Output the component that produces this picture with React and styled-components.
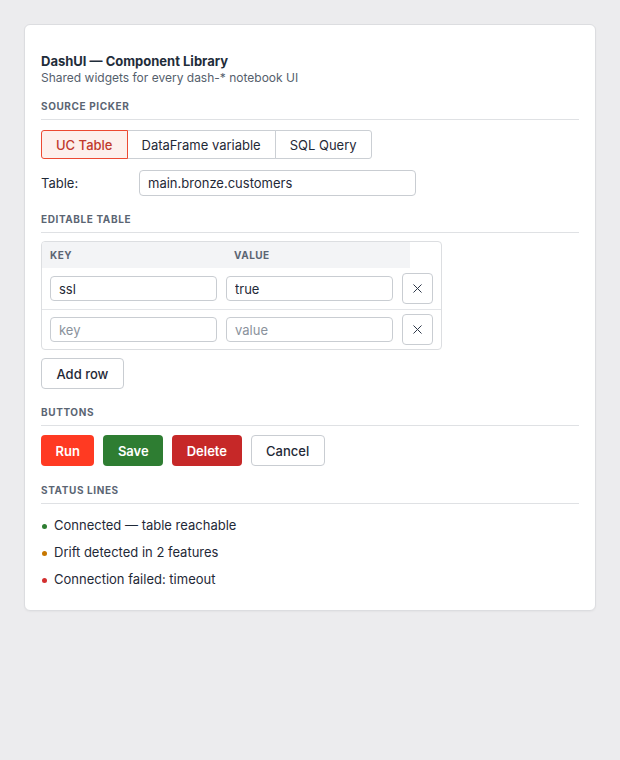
import React, { useState } from "react";
import styled, { createGlobalStyle } from "styled-components";
import { X } from "lucide-react";

const GlobalStyle = createGlobalStyle`
  html, body {
    margin: 0;
    padding: 0;
    background: #ececee;
    font-family: Inter, "Noto Sans", "Liberation Sans", sans-serif;
    color: #1f2937;
  }
`;

const Page = styled.div`
  padding: 24px;
  min-height: 760px;
  box-sizing: border-box;
`;

const Card = styled.div`
  background: #ffffff;
  border: 1px solid #dcdde0;
  border-radius: 6px;
  padding: 27px 16px 22px;
  box-shadow: 0 1px 2px rgba(0, 0, 0, 0.04);
`;

const Title = styled.div`
  font-size: 13px;
  line-height: 18px;
  font-weight: 700;
  color: #1f2d3a;
`;

const Subtitle = styled.div`
  font-size: 12px;
  line-height: 16px;
  color: #55606c;
`;

const SectionTitle = styled.div`
  margin-top: ${(p) => p.$gap || 16}px;
  margin-bottom: ${(p) => p.$after || 9}px;
  padding-bottom: 6px;
  border-bottom: 1px solid #dfe1e4;
  font-size: 10px;
  line-height: 14px;
  font-weight: 700;
  letter-spacing: 0.6px;
  text-transform: uppercase;
  color: #5b6573;
`;

const Segmented = styled.div`
  display: inline-flex;
`;

const Segment = styled.button`
  height: 29px;
  padding: 0 14px;
  font-family: inherit;
  font-size: 13px;
  font-weight: ${(p) => (p.$active ? 500 : 400)};
  color: ${(p) => (p.$active ? "#c0392b" : "#1f2937")};
  background: ${(p) => (p.$active ? "#fdf0ec" : "#ffffff")};
  border: 1px solid ${(p) => (p.$active ? "#ec4a32" : "#cbcfd4")};
  margin-left: -1px;
  position: relative;
  z-index: ${(p) => (p.$active ? 1 : 0)};
  cursor: pointer;

  &:first-child {
    margin-left: 0;
    border-radius: 3px 0 0 3px;
  }
  &:last-child {
    border-radius: 0 3px 3px 0;
  }
`;

const FieldRow = styled.div`
  display: grid;
  grid-template-columns: 90px 277px;
  column-gap: 8px;
  align-items: center;
  margin-top: 11px;
`;

const Label = styled.label`
  font-size: 13px;
  color: #1f2937;
`;

const Input = styled.input`
  box-sizing: border-box;
  width: ${(p) => p.$width || "100%"};
  height: ${(p) => p.$height || 26}px;
  padding: 0 8px;
  font-family: inherit;
  font-size: 13px;
  color: #1f2937;
  border: 1px solid #c9cdd2;
  border-radius: 4px;
  outline: none;

  &::placeholder {
    color: #8a929c;
  }
`;

const TableBox = styled.div`
  width: 401px;
  box-sizing: border-box;
  border: 1px solid #dcdee1;
  border-radius: 4px;
  overflow: hidden;
`;

const HeadRow = styled.div`
  display: flex;
  height: 26px;
`;

const HeadCell = styled.div`
  width: 184px;
  box-sizing: border-box;
  padding-left: 8px;
  display: flex;
  align-items: center;
  background: #f3f4f6;
  font-size: 10px;
  font-weight: 700;
  letter-spacing: 0.5px;
  color: #5b6573;
`;

const BodyRow = styled.div`
  display: flex;
  align-items: center;
  gap: 9px;
  padding: 0 8px;
  height: ${(p) => p.$height}px;
  border-top: ${(p) => (p.$divider ? "1px solid #e3e5e8" : "none")};
`;

const IconButton = styled.button`
  width: 31px;
  height: 31px;
  padding: 0;
  display: flex;
  align-items: center;
  justify-content: center;
  background: #ffffff;
  border: 1px solid #c9cdd2;
  border-radius: 4px;
  color: #2d3748;
  cursor: pointer;
`;

const Button = styled.button`
  height: 31px;
  padding: 0 ${(p) => (p.$variant === "plain" ? 14.5 : 13.5)}px;
  font-family: inherit;
  font-size: 13px;
  font-weight: ${(p) => (p.$variant === "plain" ? 500 : 600)};
  border-radius: 4px;
  cursor: pointer;
  color: ${(p) => (p.$variant === "plain" ? "#1f2937" : "#ffffff")};
  background: ${(p) =>
    ({
      run: "#ff3a22",
      save: "#2e7d32",
      danger: "#c62828",
      plain: "#ffffff",
    }[p.$variant])};
  border: 1px solid
    ${(p) => (p.$variant === "plain" ? "#c9cdd2" : "transparent")};
`;

const AddRow = styled(Button)`
  margin-top: 8px;
`;

const ButtonRow = styled.div`
  display: flex;
  gap: 9px;
`;

const StatusList = styled.div`
  display: flex;
  flex-direction: column;
  gap: 9px;
  padding-top: 3px;
`;

const StatusLine = styled.div`
  display: flex;
  align-items: center;
  gap: 7px;
  padding-left: 1px;
  font-size: 13px;
  line-height: 18px;
  color: #1f2937;
`;

const Dot = styled.span`
  width: 5px;
  height: 5px;
  border-radius: 50%;
  background: ${(p) => p.$color};
  margin-top: 2px;
`;

const sources = ["UC Table", "DataFrame variable", "SQL Query"];

export default function App() {
  const [source, setSource] = useState("UC Table");
  const [rows, setRows] = useState([
    { key: "ssl", value: "true" },
    { key: "", value: "" },
  ]);

  const update = (i, field, val) =>
    setRows(rows.map((r, j) => (j === i ? { ...r, [field]: val } : r)));

  return (
    <>
      <GlobalStyle />
      <Page>
        <Card>
          <Title>DashUI — Component Library</Title>
          <Subtitle>Shared widgets for every dash-* notebook UI</Subtitle>

          <SectionTitle $gap={13} $after={10}>Source picker</SectionTitle>
          <Segmented>
            {sources.map((s) => (
              <Segment key={s} $active={s === source} onClick={() => setSource(s)}>
                {s}
              </Segment>
            ))}
          </Segmented>
          <FieldRow>
            <Label>Table:</Label>
            <Input defaultValue="main.bronze.customers" />
          </FieldRow>

          <SectionTitle $gap={16} $after={8}>Editable table</SectionTitle>
          <TableBox>
            <HeadRow>
              <HeadCell>KEY</HeadCell>
              <HeadCell>VALUE</HeadCell>
            </HeadRow>
            {rows.map((r, i) => (
              <BodyRow key={i} $divider={i > 0} $height={i === 0 ? 41 : 39}>
                <Input
                  $width="167px"
                  $height={25}
                  placeholder="key"
                  value={r.key}
                  onChange={(e) => update(i, "key", e.target.value)}
                />
                <Input
                  $width="167px"
                  $height={25}
                  placeholder="value"
                  value={r.value}
                  onChange={(e) => update(i, "value", e.target.value)}
                />
                <IconButton onClick={() => setRows(rows.filter((_, j) => j !== i))}>
                  <X size={15} strokeWidth={1.6} />
                </IconButton>
              </BodyRow>
            ))}
          </TableBox>
          <AddRow
            $variant="plain"
            onClick={() => setRows([...rows, { key: "", value: "" }])}
          >
            Add row
          </AddRow>

          <SectionTitle $gap={16} $after={9}>Buttons</SectionTitle>
          <ButtonRow>
            <Button $variant="run">Run</Button>
            <Button $variant="save">Save</Button>
            <Button $variant="danger">Delete</Button>
            <Button $variant="plain">Cancel</Button>
          </ButtonRow>

          <SectionTitle $gap={17} $after={9}>Status lines</SectionTitle>
          <StatusList>
            <StatusLine>
              <Dot $color="#2e7d32" />
              Connected — table reachable
            </StatusLine>
            <StatusLine>
              <Dot $color="#c77700" />
              Drift detected in 2 features
            </StatusLine>
            <StatusLine>
              <Dot $color="#d32f2f" />
              Connection failed: timeout
            </StatusLine>
          </StatusList>
        </Card>
      </Page>
    </>
  );
}
